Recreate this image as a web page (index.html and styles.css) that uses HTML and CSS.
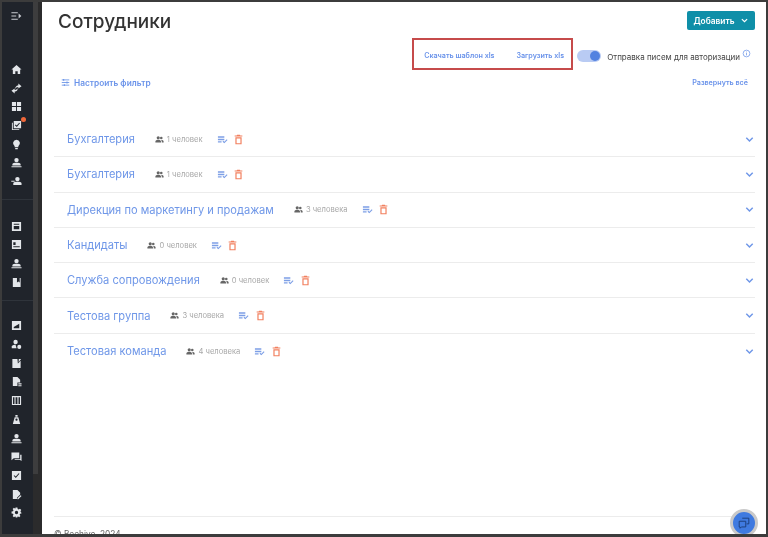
FILE: index.html
```html
<!DOCTYPE html>
<html lang="ru">
<head>
  <meta charset="UTF-8" />
  <meta name="viewport" content="width=device-width, initial-scale=1" />
  <title>Сотрудники</title>
  <link rel="stylesheet" href="styles.css">
</head>
<body>
  <svg class="defs" width="0" height="0">
    <symbol id="i-users" viewBox="0 0 12 12"><circle cx="4.3" cy="3.6" r="2.1"/><circle cx="8.4" cy="3.9" r="1.7"/><path d="M0.5 10V8.6C0.5 7 2.6 6.4 4.3 6.4S8 7 8 8.6V10ZM9 10V8.5C9 7.7 8.7 7 8.1 6.5 9.8 6.5 11.5 7.1 11.5 8.5V10Z"/></symbol>
    <symbol id="i-edit" viewBox="0 0 12 12"><path d="M1 2.5H8V4H1ZM1 5.2H8V6.7H1ZM1 7.9H5V9.4H1Z"/><path d="M6 8.4 7 7.4 8 8.4 10.6 5.6 11.5 6.5 8 10.2Z"/></symbol>
    <symbol id="i-trash" viewBox="0 0 12 12"><path fill-rule="evenodd" d="M4.5 0.8H7.5L8 1.5H10.2V2.8H1.8V1.5H4ZM2.6 3.6H9.4V11.2H2.6ZM3.9 4.8V10H8.1V4.8Z"/></symbol>
    <symbol id="i-chevron" viewBox="0 0 12 12"><path d="M2.5 4.2 6 7.7 9.5 4.2" fill="none" stroke="currentColor" stroke-width="1.6"/></symbol>
    <symbol id="s-home" viewBox="0 0 12 12"><path d="M6 1 11.5 6H10V11H7.3V7.8H4.7V11H2V6H.5Z"/></symbol>
    <symbol id="s-swap" viewBox="0 0 12 12"><path d="M8 .5 11.5 3.5 8 6V4.4C6 4.4 5 5.4 5 6.5 4.2 4.6 5.8 2.6 8 2.6ZM4 11.5 .5 8.5 4 6V7.6C6 7.6 7 6.6 7 5.5 7.8 7.4 6.2 9.4 4 9.4Z"/></symbol>
    <symbol id="s-grid" viewBox="0 0 12 12"><path d="M1 1H5.5V5.5H1ZM6.5 1H11V5.5H6.5ZM1 6.5H5.5V11H1ZM6.5 6.5H11V11H6.5Z"/></symbol>
    <symbol id="s-tasks" viewBox="0 0 12 12"><path fill-rule="evenodd" d="M3 1H11V9H3ZM5 5 4.2 5.8 6.3 7.6 9.8 3.6 9 2.9 6.2 6.1Z"/><path d="M1 3H2V10H9V11H1Z"/></symbol>
    <symbol id="s-bulb" viewBox="0 0 12 12"><path d="M6 .8A3.8 3.8 0 0 1 8 7.8V9H4V7.8A3.8 3.8 0 0 1 6 .8ZM4.6 9.8H7.4V11.2H4.6Z"/></symbol>
    <symbol id="s-people" viewBox="0 0 12 12"><circle cx="6" cy="3.4" r="2.4"/><path d="M1.5 8C1.5 6.6 4 6.2 6 6.2S10.5 6.6 10.5 8V9.3H1.5ZM.5 10H11.5V11.2H.5Z"/></symbol>
    <symbol id="s-person-add" viewBox="0 0 12 12"><circle cx="7" cy="3.4" r="2.4"/><path d="M2.5 8C2.5 6.6 5 6.2 7 6.2S11.5 6.6 11.5 8V9.8H2.5ZM.3 5.2H4V6.4H.3Z"/></symbol>
    <symbol id="s-box" viewBox="0 0 12 12"><path fill-rule="evenodd" d="M1 1H11V11H1ZM3 3V4.2H9V3ZM3 5.5V9H9V5.5Z"/></symbol>
    <symbol id="s-card" viewBox="0 0 12 12"><path fill-rule="evenodd" d="M1 1H11V11H1ZM2.5 3.5V6.5H5V3.5ZM2.5 8V9H9.5V8Z"/></symbol>
    <symbol id="s-book" viewBox="0 0 12 12"><path d="M2 1H10.5V11H2ZM6.5 1V6L8 5 9.5 6V1Z"/></symbol>
    <symbol id="s-chart" viewBox="0 0 12 12"><path fill-rule="evenodd" d="M1 1H11V11H1ZM3 7.5V9H9V4Z"/></symbol>
    <symbol id="s-person-cog" viewBox="0 0 12 12"><circle cx="5" cy="3.2" r="2.4"/><path d="M.8 10V8.3C.8 6.9 3 6.2 5 6.2L6 10Z"/><circle cx="9" cy="8.6" r="2.2"/></symbol>
    <symbol id="s-report" viewBox="0 0 12 12"><path d="M1.5 1H7L7.5 6 10.5 3V11H1.5ZM8.5 1 11 1 8.3 4.5Z"/></symbol>
    <symbol id="s-doc" viewBox="0 0 12 12"><path d="M2 1H7L10 4V7H7V11H2ZM8 8H11.5V9.2H8ZM8 10H11.5V11.2H8Z"/></symbol>
    <symbol id="s-table" viewBox="0 0 12 12"><path fill-rule="evenodd" d="M1 1H11V11H1ZM2.2 2.5V9.8H3.8V2.5ZM5 2.5V9.8H7V2.5ZM8.2 2.5V9.8H9.8V2.5Z"/></symbol>
    <symbol id="s-badge" viewBox="0 0 12 12"><path d="M4.8 1H7.2V3H4.8ZM4 3.5H8L10 11H2ZM6 5A1.2 1.2 0 1 0 6 7.4 1.2 1.2 0 0 0 6 5Z" fill-rule="evenodd"/></symbol>
    <symbol id="s-chat" viewBox="0 0 12 12"><path d="M.5 1.5H9V8H3L.5 10ZM10 4H11.5V11L9.5 9.5H4V8.8H10Z"/></symbol>
    <symbol id="s-check" viewBox="0 0 12 12"><path fill-rule="evenodd" d="M1 1H11V11H1ZM3.6 5.6 2.9 6.4 5.2 8.6 9.2 4.2 8.4 3.5 5.2 7.1Z"/></symbol>
    <symbol id="s-note" viewBox="0 0 12 12"><path d="M2 1H7L10 4V6L6.5 9.5V11H2ZM7 10.2 10.5 6.7 11.5 7.7 8 11.2H7Z"/></symbol>
    <symbol id="s-gear" viewBox="0 0 12 12"><path fill-rule="evenodd" d="M5 .6H7L7.3 2.2 8.4 2.7 9.8 1.8 11.2 3.2 10.3 4.6 10.8 5.7 11.4 6.2V7L9.9 7.4 9.4 8.5 10.3 9.9 8.9 11.1 7.5 10.2 6.8 11.4H5.2L4.7 10.2 3.2 11.1 1.8 9.8 2.7 8.4 2.2 7.4.6 7V5L2.2 4.7 2.7 3.6 1.8 2.2 3.2.9 4.6 1.8ZM6 4.2A1.8 1.8 0 1 0 6 7.8 1.8 1.8 0 0 0 6 4.2Z"/></symbol>
  </svg>

  <div class="app">
    <nav class="sidebar">
      <div class="side-toggle">
        <svg class="toggle-icon" viewBox="0 0 14 10"><path d="M0 1H8M0 5H6M0 9H8" stroke="#c9ccd2" stroke-width="1.4"/><path d="M9 2 12.5 5 9 8Z" fill="#c9ccd2"/></svg>
      </div>
      <div class="side-group first">
        <a class="side-item"><svg><use href="#s-home"/></svg></a>
        <a class="side-item"><svg><use href="#s-swap"/></svg></a>
        <a class="side-item"><svg><use href="#s-grid"/></svg></a>
        <a class="side-item"><svg><use href="#s-tasks"/></svg><span class="side-dot"></span></a>
        <a class="side-item"><svg><use href="#s-bulb"/></svg></a>
        <a class="side-item"><svg><use href="#s-people"/></svg></a>
        <a class="side-item"><svg><use href="#s-person-add"/></svg></a>
      </div>
      <div class="side-group">
        <a class="side-item"><svg><use href="#s-box"/></svg></a>
        <a class="side-item"><svg><use href="#s-card"/></svg></a>
        <a class="side-item"><svg><use href="#s-people"/></svg></a>
        <a class="side-item"><svg><use href="#s-book"/></svg></a>
      </div>
      <div class="side-group">
        <a class="side-item"><svg><use href="#s-chart"/></svg></a>
        <a class="side-item"><svg><use href="#s-person-cog"/></svg></a>
        <a class="side-item"><svg><use href="#s-report"/></svg></a>
        <a class="side-item"><svg><use href="#s-doc"/></svg></a>
        <a class="side-item"><svg><use href="#s-table"/></svg></a>
        <a class="side-item"><svg><use href="#s-badge"/></svg></a>
        <a class="side-item"><svg><use href="#s-people"/></svg></a>
        <a class="side-item"><svg><use href="#s-chat"/></svg></a>
        <a class="side-item"><svg><use href="#s-check"/></svg></a>
        <a class="side-item"><svg><use href="#s-note"/></svg></a>
        <a class="side-item"><svg><use href="#s-gear"/></svg></a>
      </div>
    </nav>
    <div class="side-scroll"><div class="side-thumb"></div></div>

    <main class="main">
      <header class="page-head">
        <h1>Сотрудники</h1>
        <button class="btn-add">Добавить <svg class="btn-caret"><use href="#i-chevron"/></svg></button>
      </header>

      <div class="tools">
        <div class="xls-box">
          <a class="link">Скачать шаблон xls</a>
          <a class="link">Загрузить xls</a>
        </div>
        <span class="switch"><span class="switch-knob"></span></span>
        <span class="switch-label">Отправка писем для авторизации</span>
        <svg class="info" viewBox="0 0 12 12"><circle cx="6" cy="6" r="4.5" fill="none" stroke="#6f97e8"/><path d="M6 5.3V8.5M6 3.4V4.5" stroke="#6f97e8"/></svg>
      </div>

      <div class="filter-row">
        <a class="link filter">
          <svg class="filter-icon" viewBox="0 0 12 12"><path d="M1 2.5H11M1 6H11M1 9.5H11" stroke="#6f97e8" stroke-width="1.2"/><path d="M3.5 1.2V3.8M8 4.7V7.3M4.5 8.2V10.8" stroke="#6f97e8" stroke-width="1.5"/></svg>
          Настроить фильтр
        </a>
        <a class="link expand">Развернуть всё</a>
      </div>

      <section class="groups">
        <div class="group">
          <span class="group-name">Бухгалтерия</span>
          <span class="group-count"><svg><use href="#i-users"/></svg>1 человек</span>
          <svg class="act act-edit"><use href="#i-edit"/></svg>
          <svg class="act act-del"><use href="#i-trash"/></svg>
          <svg class="group-open"><use href="#i-chevron"/></svg>
        </div>
        <div class="group">
          <span class="group-name">Бухгалтерия</span>
          <span class="group-count"><svg><use href="#i-users"/></svg>1 человек</span>
          <svg class="act act-edit"><use href="#i-edit"/></svg>
          <svg class="act act-del"><use href="#i-trash"/></svg>
          <svg class="group-open"><use href="#i-chevron"/></svg>
        </div>
        <div class="group">
          <span class="group-name">Дирекция по маркетингу и продажам</span>
          <span class="group-count"><svg><use href="#i-users"/></svg>3 человека</span>
          <svg class="act act-edit"><use href="#i-edit"/></svg>
          <svg class="act act-del"><use href="#i-trash"/></svg>
          <svg class="group-open"><use href="#i-chevron"/></svg>
        </div>
        <div class="group">
          <span class="group-name">Кандидаты</span>
          <span class="group-count"><svg><use href="#i-users"/></svg>0 человек</span>
          <svg class="act act-edit"><use href="#i-edit"/></svg>
          <svg class="act act-del"><use href="#i-trash"/></svg>
          <svg class="group-open"><use href="#i-chevron"/></svg>
        </div>
        <div class="group">
          <span class="group-name">Служба сопровождения</span>
          <span class="group-count"><svg><use href="#i-users"/></svg>0 человек</span>
          <svg class="act act-edit"><use href="#i-edit"/></svg>
          <svg class="act act-del"><use href="#i-trash"/></svg>
          <svg class="group-open"><use href="#i-chevron"/></svg>
        </div>
        <div class="group">
          <span class="group-name">Тестова группа</span>
          <span class="group-count"><svg><use href="#i-users"/></svg>3 человека</span>
          <svg class="act act-edit"><use href="#i-edit"/></svg>
          <svg class="act act-del"><use href="#i-trash"/></svg>
          <svg class="group-open"><use href="#i-chevron"/></svg>
        </div>
        <div class="group last">
          <span class="group-name">Тестовая команда</span>
          <span class="group-count"><svg><use href="#i-users"/></svg>4 человека</span>
          <svg class="act act-edit"><use href="#i-edit"/></svg>
          <svg class="act act-del"><use href="#i-trash"/></svg>
          <svg class="group-open"><use href="#i-chevron"/></svg>
        </div>
      </section>

      <footer class="footer">© Beehive, 2024</footer>

      <button class="chat-btn">
        <svg viewBox="0 0 16 16"><path d="M6 2.5H13.5V9H11M2.5 6H10V12.5H5L3.5 14V12.5H2.5Z" fill="none" stroke="#1d3f7c" stroke-width="1.1"/></svg>
      </button>
    </main>
  </div>
</body>
</html>
```

FILE: styles.css
```css
html, body {
  margin: 0;
  height: 100%;
  overflow: hidden;
}

body {
  font-family: Inter, "Noto Sans", sans-serif;
  background: #3c3c3c;
  color: #333;
}

.defs {
  position: absolute;
}

.app {
  display: flex;
  height: 532px;
  margin: 2px 2px 3px;
  filter: blur(0.6px);
}

.sidebar {
  width: 31px;
  box-sizing: border-box;
  padding-right: 2px;
  background: #20242b;
  display: flex;
  flex-direction: column;
  flex-shrink: 0;
  overflow: hidden;
}

.side-toggle {
  height: 27px;
  flex-shrink: 0;
  display: flex;
  align-items: center;
  justify-content: center;
}

.toggle-icon {
  width: 12px;
  height: 8px;
}

.side-group {
  flex-shrink: 0;
  padding: 17px 0 8px;
  margin-right: -2px;
  border-top: 1px solid #2f343b;
}

.side-group.first {
  padding-top: 31px;
  border-top: 0;
}

.side-group:last-child {
  padding: 16px 0 0;
}

.side-item {
  display: flex;
  height: 18.7px;
  padding-right: 2px;
  align-items: center;
  justify-content: center;
  position: relative;
  color: #e3e6ea;
}

.side-item svg {
  width: 11px;
  height: 11px;
  fill: #e3e6ea;
}

.side-dot {
  position: absolute;
  top: 1px;
  right: 7px;
  width: 5px;
  height: 5px;
  border-radius: 50%;
  background: #f0683a;
}

.side-scroll {
  width: 9px;
  background: #2b2b2c;
  flex-shrink: 0;
}

.side-thumb {
  height: 472px;
  width: 5px;
  background: #3d3d3e;
}

.main {
  flex: 1;
  background: #fff;
  padding: 0 11px 0 12px;
  position: relative;
  display: flex;
  flex-direction: column;
  overflow: hidden;
  min-width: 0;
}

.page-head {
  display: flex;
  justify-content: space-between;
  align-items: flex-start;
  padding-left: 4px;
  height: 32px;
}

h1 {
  margin: 6px 0 0;
  font-size: 19px;
  line-height: 27px;
  font-weight: 500;
  color: #333;
}

.btn-add {
  margin-top: 9px;
  width: 68px;
  height: 19px;
  border: 0;
  border-radius: 2px;
  background: #0f8fa8;
  color: #fff;
  font: 600 8.4px Inter, sans-serif;
  display: flex;
  align-items: center;
  justify-content: center;
  gap: 5px;
  padding: 0;
}

.btn-caret {
  width: 9px;
  height: 9px;
  color: #fff;
}

.tools {
  display: flex;
  align-items: center;
  justify-content: flex-end;
  height: 32px;
  margin-top: 4px;
}

.xls-box {
  display: flex;
  justify-content: space-between;
  align-items: center;
  box-sizing: border-box;
  width: 161px;
  height: 32px;
  padding: 3px 7px 0 10px;
  border: 2px solid #c64b4b;
  margin-right: 4px;
}

.link {
  color: #6a93ea;
  font-size: 7.15px;
  font-weight: 600;
}

.switch {
  width: 24px;
  height: 12px;
  border-radius: 6px;
  background: #b9cbf3;
  position: relative;
  margin: 4px 6px 0 0;
}

.switch-knob {
  position: absolute;
  right: 1px;
  top: 1px;
  width: 10px;
  height: 10px;
  border-radius: 50%;
  background: #5282e0;
}

.switch-label {
  font-size: 8px;
  color: #444;
  margin-top: 5px;
}

.info {
  width: 9px;
  height: 9px;
  margin: -2px 4px 0 2px;
}

.filter-row {
  display: flex;
  justify-content: space-between;
  align-items: center;
  margin-top: 7px;
  height: 11px;
  padding-left: 7px;
}

.filter {
  display: flex;
  align-items: center;
  gap: 4px;
  font-size: 8.3px;
}

.expand {
  margin-right: 7px;
}

.filter-icon {
  width: 9px;
  height: 9px;
}

.groups {
  margin-top: 34px;
  display: flex;
  flex-direction: column;
}

.group {
  height: 35.3px;
  box-sizing: border-box;
  border-bottom: 1px solid #ececec;
  display: flex;
  align-items: center;
  padding: 0 0 0 13px;
}

.group.last {
  border-bottom: 0;
}

.group-name {
  font-size: 11.1px;
  color: #6f97e8;
  margin-right: 20px;
}

.group-count {
  display: flex;
  align-items: center;
  gap: 3px;
  font-size: 7.6px;
  color: #a8a8a8;
  margin-right: 14px;
}

.group-count svg {
  width: 9px;
  height: 9px;
  fill: #666;
}

.act {
  width: 11px;
  height: 11px;
  margin-right: 5.5px;
}

.act-edit {
  fill: #7d9fe6;
}

.act-del {
  fill: #f2805f;
}

.group-open {
  width: 11px;
  height: 11px;
  margin-left: auto;
  color: #6f97e8;
}

.footer {
  margin-top: auto;
  height: 18px;
  box-sizing: border-box;
  border-top: 1px solid #ececec;
  padding-top: 12px;
  font-size: 8.3px;
  color: #666;
  white-space: nowrap;
}

.chat-btn {
  position: absolute;
  right: 8px;
  bottom: -3px;
  width: 28px;
  height: 28px;
  border-radius: 50%;
  border: 3px solid #c9c9c9;
  background: #3f7ae0;
  padding: 4px;
  display: flex;
}

.chat-btn svg {
  width: 14px;
  height: 14px;
}
```
